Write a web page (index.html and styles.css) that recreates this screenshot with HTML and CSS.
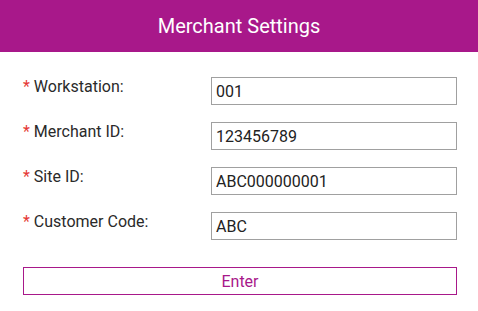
FILE: index.html
```html
<!DOCTYPE html>
<html>
<head>
<meta charset="utf-8">
<link rel="stylesheet" href="styles.css">
</head>
<body>
<header class="header">Merchant Settings</header>
<form class="form">
  <div class="row">
    <label class="label"><span class="req">*</span> Workstation:</label>
    <input class="input" type="text" value="001">
  </div>
  <div class="row">
    <label class="label"><span class="req">*</span> Merchant ID:</label>
    <input class="input" type="text" value="123456789">
  </div>
  <div class="row">
    <label class="label"><span class="req">*</span> Site ID:</label>
    <input class="input" type="text" value="ABC000000001">
  </div>
  <div class="row">
    <label class="label"><span class="req">*</span> Customer Code:</label>
    <input class="input" type="text" value="ABC">
  </div>
  <button class="button" type="button">Enter</button>
</form>
</body>
</html>
```
FILE: styles.css
```css
html, body {
  margin: 0;
  padding: 0;
  background: #fff;
  font-family: Roboto, "Liberation Sans", sans-serif;
}
.header {
  height: 52px;
  background: #a8188a;
  color: #fff;
  font-size: 20px;
  display: flex;
  align-items: center;
  justify-content: center;
  padding-bottom: 1px;
  box-sizing: border-box;
}
.form {
  display: flex;
  flex-direction: column;
  padding: 25px 21px 0 23px;
  gap: 17px;
}
.row {
  display: flex;
  align-items: flex-start;
  height: 28px;
}
.label {
  width: 188px;
  font-size: 16px;
  color: #2a2a2a;
  padding-top: 0;
}
.req {
  color: #e53935;
}
.input {
  flex: 1;
  height: 28px;
  box-sizing: border-box;
  margin: 0;
  border: 1px solid #a0a0a0;
  padding: 0 4px;
  font-family: Roboto, "Liberation Sans", sans-serif;
  font-size: 16px;
  color: #222;
  outline: none;
}
.button {
  margin-top: 10px;
  height: 28px;
  box-sizing: border-box;
  border: 1px solid #a8188a;
  background: #fff;
  color: #a8188a;
  font-family: Roboto, "Liberation Sans", sans-serif;
  font-size: 16px;
  padding: 0;
}
```
